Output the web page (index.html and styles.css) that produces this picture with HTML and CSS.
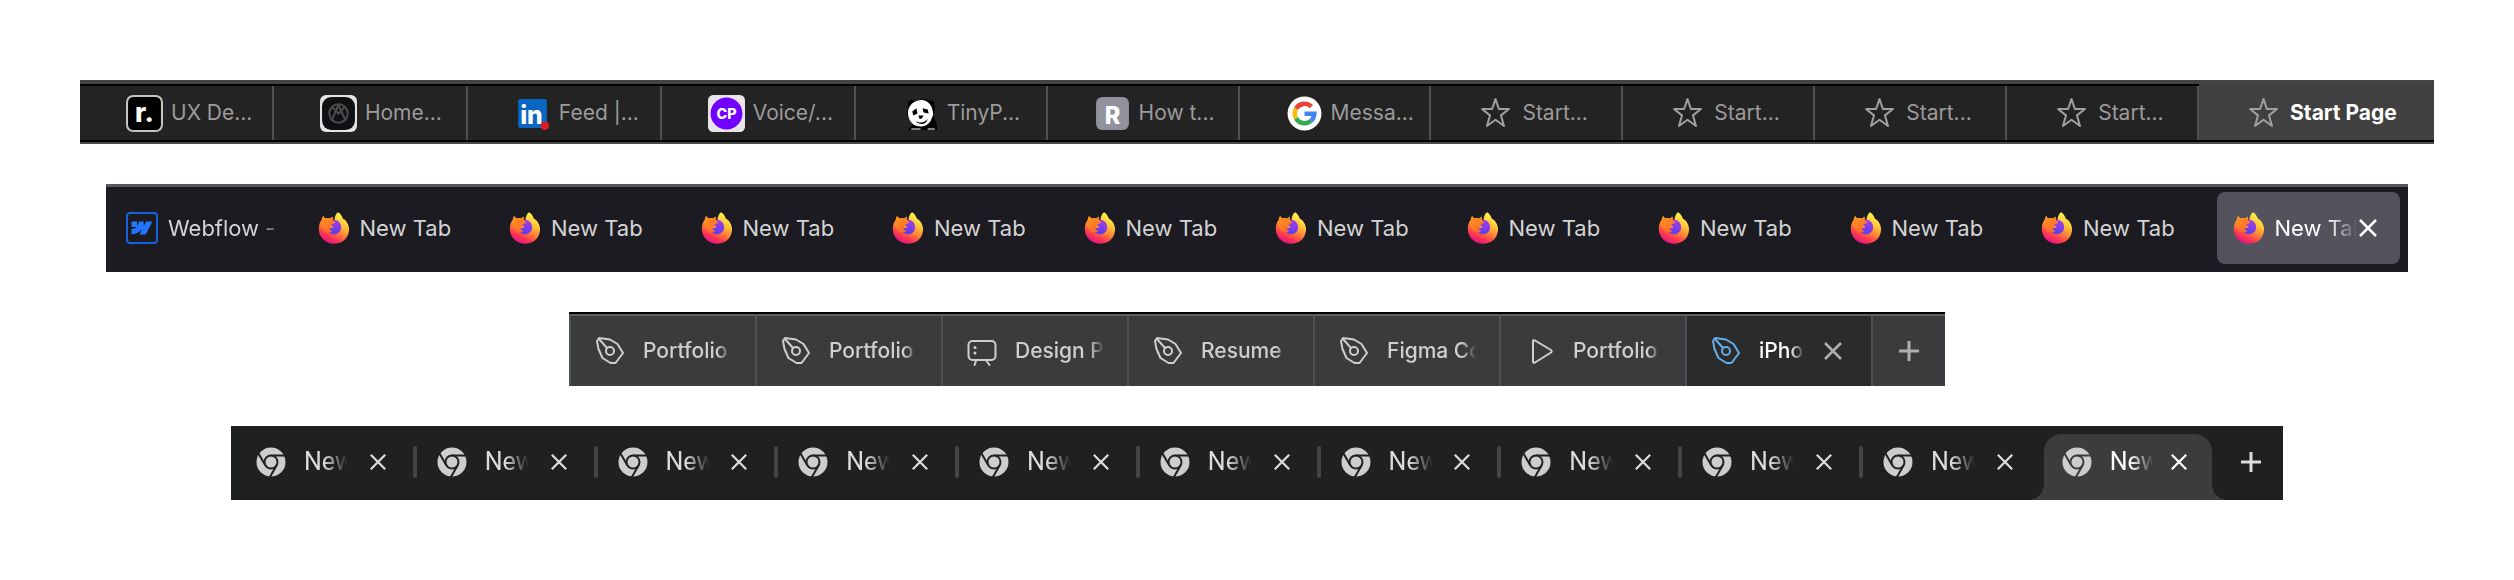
FILE: index.html
```html
<!DOCTYPE html>
<html lang="en">
<head>
    <meta charset="UTF-8">
    <meta name="viewport" content="width=device-width, initial-scale=1.0">
    <title>Browser Tabs</title>
    <link rel="stylesheet" href="styles.css">
</head>
<body>
    <svg class="sprite" width="0" height="0" aria-hidden="true">
        <defs>
            <linearGradient id="ff-body" x1="0.8" y1="0.05" x2="0.35" y2="1">
                <stop offset="0" stop-color="#fff44f"/>
                <stop offset="0.3" stop-color="#ffc93a"/>
                <stop offset="0.55" stop-color="#ff8a35"/>
                <stop offset="0.78" stop-color="#ff3d4c"/>
                <stop offset="1" stop-color="#e0108a"/>
            </linearGradient>
            <linearGradient id="ff-globe" x1="0.6" y1="0" x2="0.4" y2="1">
                <stop offset="0" stop-color="#a53be6"/>
                <stop offset="1" stop-color="#5a3fe8"/>
            </linearGradient>
            <linearGradient id="ff-fox" x1="0" y1="0" x2="0.6" y2="1">
                <stop offset="0" stop-color="#ff9a1f"/>
                <stop offset="1" stop-color="#ff6a2b"/>
            </linearGradient>
            <mask id="chrome-cut">
                <rect width="30" height="30" fill="#fff"/>
                <circle cx="15" cy="15" r="7.5" fill="#000"/>
                <path d="M15 8.4H30M20.7 18.3L13.2 31.3M9.3 18.3L1.8 5.3" stroke="#000" stroke-width="2"/>
            </mask>
        </defs>
        <symbol id="star" viewBox="0 0 30 32">
            <path d="M15 2L18.4 12H28.5L20.5 18.4L23.5 29L15 22.8L6.5 29L9.5 18.4L1.5 12H11.6Z" fill="none" stroke="currentColor" stroke-width="2" stroke-linejoin="round"/>
        </symbol>
        <symbol id="firefox" viewBox="0 0 32 32">
            <path d="M20 0.3C23.5 2 24 5.5 25.2 7C26.8 7.3 27.5 8.5 28.3 9.5C30.5 12.5 31.3 15.5 31 18.5C30.3 26.5 24 31.8 16 31.8C8 31.8 1.200 26 0.8 17.500C0.6 13 2 10 3.800 8C3.800 6.500 4.200 5.200 5.300 3.900C5.700 5 6.300 5.600 7.300 6.300C9 5.800 11 6 12.300 6.700C12.800 5.700 13.800 5 15 4.700C14.300 5.600 14.200 6.800 15 7.800L16.500 8.200C16.500 4.500 18 1.800 20 0.300Z" fill="url(#ff-body)"/>
            <path d="M14 8C19.500 6.300 24.200 11.500 23 17C21.800 22 15 24 11.500 20.500C9.800 18.500 10 16.500 11 15.500C13 16.800 15 16 15.500 14.500C14.500 14 13 13.800 12.500 12.500C12 11 12.500 9 14 8Z" fill="url(#ff-globe)"/>
            <path d="M1.800 13C2.200 10.500 2.800 9 3.800 8C3.800 6.500 4.200 5.200 5.300 3.900C5.700 5 6.300 5.600 7.300 6.300C9 5.800 11 6 12.300 6.700C12.800 5.700 13.800 5 15 4.700C14.200 6.300 14.300 7.500 15.300 8.700C17 9.300 17.300 10.200 17 11C16 12 13.800 12 13 13.200C12.700 14.300 12.800 15 11.500 16C12 18 13 19 14.500 19.500C10 21.500 6 19.500 5 16.500C4.200 14.500 3 14 1.800 13Z" fill="url(#ff-fox)"/>
        </symbol>
        <symbol id="pen" viewBox="0 0 30 30">
            <g fill="none" stroke="currentColor" stroke-width="2" stroke-linejoin="round" stroke-linecap="round">
                <path d="M4 2L15 3.5L22.5 8L28 17L20.5 27L15.5 27L7.5 22L3.5 13L2 5Z"/>
                <circle cx="15" cy="15" r="4"/>
                <path d="M4 3L12 12"/>
            </g>
        </symbol>
        <symbol id="board" viewBox="0 0 30 30">
            <g fill="none" stroke="currentColor" stroke-width="2" stroke-linecap="round">
                <rect x="1.5" y="5" width="27" height="19" rx="4"/>
                <path d="M9 25L7.5 29M19.5 25L22.5 29"/>
            </g>
            <circle cx="8" cy="11.5" r="1.5" fill="currentColor"/>
            <circle cx="8" cy="17" r="1.5" fill="currentColor"/>
        </symbol>
        <symbol id="play" viewBox="0 0 30 30">
            <path d="M8 5.5Q8 3.5 10 4.5L26 14Q27.5 15 26 16.5L10 26.5Q8 27.5 8 25.5Z" fill="none" stroke="currentColor" stroke-width="2" stroke-linejoin="round"/>
        </symbol>
        <symbol id="chrome" viewBox="0 0 30 30">
            <circle cx="15" cy="15" r="14.5" fill="#cdcdcd" mask="url(#chrome-cut)"/>
            <circle cx="15" cy="15" r="5.5" fill="#cdcdcd"/>
        </symbol>
        <symbol id="cross" viewBox="0 0 20 20">
            <path d="M2 2L18 18M18 2L2 18" fill="none" stroke="currentColor" stroke-width="2.5"/>
        </symbol>
        <symbol id="plus" viewBox="0 0 22 22">
            <path d="M11 1V21M1 11H21" fill="none" stroke="currentColor" stroke-width="3"/>
        </symbol>
    </svg>

    <main class="showcase">
        <!-- Safari -->
        <nav class="bar safari" aria-label="Safari tabs">
            <button class="tab">
                <svg class="icon" viewBox="0 0 36 36"><rect x="1" y="1" width="34" height="34" rx="6" fill="#000" stroke="#c4c4c4" stroke-width="2"/><text class="glyph" x="18" y="26" font-size="26">r.</text></svg>
                <span class="label">UX De...</span>
            </button>
            <button class="tab">
                <svg class="icon" viewBox="0 0 36 36"><rect width="36" height="36" rx="6" fill="#e4e4e4"/><rect x="2" y="2" width="32" height="32" rx="9" fill="#101014"/><g fill="none" stroke="#4b4b4b" stroke-width="2"><circle cx="18" cy="18" r="9"/><path d="M11 25L18 10L25 25M12 12L18 18L24 12"/></g></svg>
                <span class="label">Home...</span>
            </button>
            <button class="tab">
                <svg class="icon" viewBox="0 0 36 36"><rect x="4" y="4" width="28" height="28" rx="2" fill="#0a66c2"/><text class="glyph" x="17" y="28" font-size="24">in</text><circle cx="30" cy="30" r="4" fill="#e01b1b"/></svg>
                <span class="label">Feed |...</span>
            </button>
            <button class="tab">
                <svg class="icon" viewBox="0 0 36 36"><rect width="36" height="36" rx="5" fill="#e8e4ea"/><circle cx="18" cy="18" r="15.5" fill="#7300ff"/><text class="glyph" x="18" y="23" font-size="14">CP</text></svg>
                <span class="label">Voice/...</span>
            </button>
            <button class="tab">
                <svg class="icon" viewBox="0 0 36 36"><path d="M6 7L9 4L13 6L22 4L31 6L32 14L30 20L34 28V34H6L10 29L5 20Z" fill="#000"/><path d="M17 5C24 4 29 9 30 16C31 20 29 22 28 25C25 30 19 32 14 30C8 28 5 21 6 15C7 10 11 6 17 5Z" fill="#fff"/><path d="M10 16L14 13L15 18L11 20ZM20 13L25 14L26 18L21 17ZM16 20H21L19 23H17ZM13 25C17 28 22 27 25 23C24 29 17 30 13 25Z" fill="#000"/><path d="M9 33H18M25 33H32" stroke="#fff"/></svg>
                <span class="label">TinyP...</span>
            </button>
            <button class="tab">
                <svg class="icon" viewBox="0 0 36 36"><rect x="2" y="2" width="32" height="32" rx="6" fill="#92929f"/><text class="glyph" x="18" y="28" font-size="23">R</text></svg>
                <span class="label">How t...</span>
            </button>
            <button class="tab">
                <svg class="icon" viewBox="0 0 36 36"><circle cx="18" cy="18" r="16.5" fill="#fff"/><g fill="none" stroke-width="4.5"><path d="M24.7 11.3A9.5 9.5 0 0 0 9.8 13.3" stroke="#ea4335"/><path d="M9.8 13.3A9.5 9.5 0 0 0 9.8 22.7" stroke="#fbbc05"/><path d="M9.8 22.7A9.5 9.5 0 0 0 24.1 25.3" stroke="#34a853"/><path d="M24.1 25.3A9.5 9.5 0 0 0 27.5 18.2H18" stroke="#4285f4"/></g></svg>
                <span class="label">Messa...</span>
            </button>
            <button class="tab"><svg class="icon star"><use href="#star"/></svg><span class="label">Start...</span></button>
            <button class="tab"><svg class="icon star"><use href="#star"/></svg><span class="label">Start...</span></button>
            <button class="tab"><svg class="icon star"><use href="#star"/></svg><span class="label">Start...</span></button>
            <button class="tab"><svg class="icon star"><use href="#star"/></svg><span class="label">Start...</span></button>
            <button class="tab active"><svg class="icon star"><use href="#star"/></svg><span class="label">Start Page</span></button>
        </nav>

        <!-- Firefox -->
        <nav class="bar firefox" aria-label="Firefox tabs">
            <button class="tab">
                <svg class="icon" viewBox="0 0 32 32"><rect x="1" y="1" width="30" height="30" rx="3" fill="none" stroke="#1762de" stroke-width="2"/><path transform="translate(5.500 5.500) scale(0.870)" d="M24 4.515L16.342 19.485H9.149L12.354 13.281H12.210C9.566 16.713 5.621 18.973 0 19.485V13.367S3.596 13.154 5.710 10.932H0V4.515H6.417V9.793H6.561L9.183 4.515H14.037V9.759H14.181L16.901 4.515Z" fill="#2176ff"/></svg>
                <span class="label">Webflow -</span>
            </button>
            <button class="tab"><svg class="icon"><use href="#firefox"/></svg><span class="label">New Tab</span></button>
            <button class="tab"><svg class="icon"><use href="#firefox"/></svg><span class="label">New Tab</span></button>
            <button class="tab"><svg class="icon"><use href="#firefox"/></svg><span class="label">New Tab</span></button>
            <button class="tab"><svg class="icon"><use href="#firefox"/></svg><span class="label">New Tab</span></button>
            <button class="tab"><svg class="icon"><use href="#firefox"/></svg><span class="label">New Tab</span></button>
            <button class="tab"><svg class="icon"><use href="#firefox"/></svg><span class="label">New Tab</span></button>
            <button class="tab"><svg class="icon"><use href="#firefox"/></svg><span class="label">New Tab</span></button>
            <button class="tab"><svg class="icon"><use href="#firefox"/></svg><span class="label">New Tab</span></button>
            <button class="tab"><svg class="icon"><use href="#firefox"/></svg><span class="label">New Tab</span></button>
            <button class="tab"><svg class="icon"><use href="#firefox"/></svg><span class="label">New Tab</span></button>
            <div class="tab active">
                <svg class="icon"><use href="#firefox"/></svg>
                <button class="label">New Tab</button>
                <button class="close" aria-label="Close tab"><svg><use href="#cross"/></svg></button>
            </div>
        </nav>

        <!-- Figma -->
        <nav class="bar figma" aria-label="Figma tabs">
            <button class="tab"><svg class="icon"><use href="#pen"/></svg><span class="label">Portfolio</span></button>
            <button class="tab"><svg class="icon"><use href="#pen"/></svg><span class="label">Portfolio</span></button>
            <button class="tab"><svg class="icon"><use href="#board"/></svg><span class="label">Design P</span></button>
            <button class="tab"><svg class="icon"><use href="#pen"/></svg><span class="label">Resume</span></button>
            <button class="tab"><svg class="icon"><use href="#pen"/></svg><span class="label">Figma Co</span></button>
            <button class="tab"><svg class="icon"><use href="#play"/></svg><span class="label">Portfolio</span></button>
            <div class="tab active">
                <svg class="icon"><use href="#pen"/></svg>
                <button class="label">iPho</button>
                <button class="close" aria-label="Close tab"><svg><use href="#cross"/></svg></button>
            </div>
            <button class="add" aria-label="New tab"><svg><use href="#plus"/></svg></button>
        </nav>

        <!-- Chrome -->
        <nav class="bar chrome" aria-label="Chrome tabs">
            <div class="tab"><svg class="icon"><use href="#chrome"/></svg><button class="label">New</button><button class="close" aria-label="Close tab"><svg><use href="#cross"/></svg></button></div>
            <div class="tab"><svg class="icon"><use href="#chrome"/></svg><button class="label">New</button><button class="close" aria-label="Close tab"><svg><use href="#cross"/></svg></button></div>
            <div class="tab"><svg class="icon"><use href="#chrome"/></svg><button class="label">New</button><button class="close" aria-label="Close tab"><svg><use href="#cross"/></svg></button></div>
            <div class="tab"><svg class="icon"><use href="#chrome"/></svg><button class="label">New</button><button class="close" aria-label="Close tab"><svg><use href="#cross"/></svg></button></div>
            <div class="tab"><svg class="icon"><use href="#chrome"/></svg><button class="label">New</button><button class="close" aria-label="Close tab"><svg><use href="#cross"/></svg></button></div>
            <div class="tab"><svg class="icon"><use href="#chrome"/></svg><button class="label">New</button><button class="close" aria-label="Close tab"><svg><use href="#cross"/></svg></button></div>
            <div class="tab"><svg class="icon"><use href="#chrome"/></svg><button class="label">New</button><button class="close" aria-label="Close tab"><svg><use href="#cross"/></svg></button></div>
            <div class="tab"><svg class="icon"><use href="#chrome"/></svg><button class="label">New</button><button class="close" aria-label="Close tab"><svg><use href="#cross"/></svg></button></div>
            <div class="tab"><svg class="icon"><use href="#chrome"/></svg><button class="label">New</button><button class="close" aria-label="Close tab"><svg><use href="#cross"/></svg></button></div>
            <div class="tab last"><svg class="icon"><use href="#chrome"/></svg><button class="label">New</button><button class="close" aria-label="Close tab"><svg><use href="#cross"/></svg></button></div>
            <div class="tab active"><svg class="icon"><use href="#chrome"/></svg><button class="label">New</button><button class="close" aria-label="Close tab"><svg><use href="#cross"/></svg></button></div>
            <button class="add" aria-label="New tab"><svg><use href="#plus"/></svg></button>
        </nav>
    </main>
</body>
</html>
```
FILE: styles.css
```css
* {
    box-sizing: border-box;
}

body {
    margin: 0;
    background-color: #fff;
    font-family: Inter, "Liberation Sans", sans-serif;
}

button {
    margin: 0;
    padding: 0;
    border: none;
    background: none;
    color: inherit;
    font: inherit;
    text-align: left;
    cursor: pointer;
}

.sprite {
    display: block;
}

.showcase {
    display: flex;
    flex-direction: column;
    align-items: center;
    gap: 40px;
    padding: 80px;
}

.bar {
    display: grid;
    width: 100%;
    font-size: 22px;
    line-height: 28px;
}

.tab {
    display: flex;
    align-items: center;
    min-width: 0;
}

.icon {
    flex: none;
    width: 32px;
    height: 32px;
}

.label {
    min-width: 0;
    overflow: hidden;
    white-space: nowrap;
}

.close {
    flex: none;
}

.close svg {
    display: block;
    width: 20px;
    height: 20px;
}

.add {
    display: flex;
    align-items: center;
    justify-content: center;
}

.add svg {
    display: block;
    width: 22px;
    height: 22px;
}

.glyph {
    fill: #fff;
    font-weight: 800;
    text-anchor: middle;
}

/* Safari */
.safari {
    grid-template-columns: repeat(4, 194fr) repeat(7, 192fr) 235fr;
    border-top: 4px solid #434343;
    border-bottom: 2px solid #4a4a4a;
    background-color: #232323;
    color: #9b9b9b;
    font-size: 21px;
}

.safari .tab {
    height: 58px;
    padding-left: 46px;
    gap: 8px;
    border-top: 2px solid #000;
    border-bottom: 2px solid #000;
    background: linear-gradient(#505050, #505050) right / 2px 100% no-repeat;
}

.safari .tab.active {
    border-top-color: #404040;
    background: #404040;
    color: #fff;
    font-weight: 700;
}

.safari .icon {
    width: 37px;
    height: 37px;
}

.safari .star {
    height: 32px;
    color: #a0a0a0;
}

/* Firefox */
.firefox {
    grid-template-columns: repeat(12, 1fr);
    max-width: 2302px;
    gap: 8px;
    padding: 5px 8px 8px 4px;
    border-top: 3px solid #57575c;
    background-color: #1c1b22;
    color: #d4d4d5;
}

.firefox .tab {
    height: 72px;
    padding: 0 20px 0 16px;
    gap: 10px;
}

.firefox .tab:first-child .label {
    -webkit-mask-image: linear-gradient(to right, #000 88px, transparent 120px);
    mask-image: linear-gradient(to right, #000 88px, transparent 120px);
}

.firefox .tab.active {
    padding-right: 22px;
    border-radius: 8px;
    background-color: #53525d;
    color: #fff;
}

.firefox .active .label {
    flex: 1;
    -webkit-mask-image: linear-gradient(to right, #000 54px, transparent 82px);
    mask-image: linear-gradient(to right, #000 54px, transparent 82px);
}

.firefox .close {
    margin-left: -8px;
}

/* Figma */
.figma {
    grid-template-columns: repeat(7, 186fr) 74fr;
    max-width: 1376px;
    border-top: 2px solid #000;
    background-color: #3a3b3d;
    color: #cfcfcf;
    font-size: 21px;
    font-weight: 500;
}

.figma .tab,
.figma .add {
    height: 72px;
    border-top: 2px solid #606062;
    border-left: 2px solid #505153;
}

.figma .tab {
    padding: 0 22px 0 24px;
    gap: 18px;
}

.figma .icon {
    width: 30px;
    height: 30px;
}

.figma .label {
    flex: 1;
    -webkit-mask-image: linear-gradient(to right, #000 calc(100% - 16px), transparent);
    mask-image: linear-gradient(to right, #000 calc(100% - 16px), transparent);
}

.figma .tab.active {
    padding-right: 28px;
    background-color: #2b2b2b;
    color: #fff;
}

.figma .active .icon {
    color: #64aeea;
}

.figma .close,
.figma .add {
    color: #b0b0b0;
}

/* Chrome */
.chrome {
    grid-template-columns: repeat(10, 361fr) 336fr 142fr;
    max-width: 2052px;
    padding: 8px 0 0 5px;
    background-color: #1f2020;
    color: #dcdcdc;
    font-family: Roboto, sans-serif;
    font-size: 25px;
}

.chrome .tab,
.chrome .add {
    height: 66px;
    padding-bottom: 10px;
}

.chrome .add {
    padding-left: 8px;
    color: #dcdcdc;
}

.chrome .tab {
    position: relative;
    padding-left: 20px;
    gap: 18px;
}

.chrome .tab::after {
    content: "";
    width: 4px;
    height: 32px;
    margin-left: 8px;
    border-radius: 2px;
    background-color: #444;
}

.chrome .tab.last::after {
    background: none;
}

.chrome .icon {
    width: 30px;
    height: 30px;
}

.chrome .close svg {
    width: 18px;
    height: 18px;
}

.chrome .label {
    flex: 1;
    -webkit-mask-image: linear-gradient(to right, #000 20px, transparent 44px);
    mask-image: linear-gradient(to right, #000 20px, transparent 44px);
}

.chrome .tab.active {
    padding: 0 24px 10px 18px;
    border-radius: 18px 18px 0 0;
    background-color: #3c3c3c;
    color: #fff;
}

/* flared feet of the active tab */
.chrome .tab.active::before,
.chrome .tab.active::after {
    content: "";
    position: absolute;
    bottom: 0;
    width: 16px;
    height: 16px;
    margin: 0;
    border-radius: 0;
}

.chrome .tab.active::before {
    right: 100%;
    background: radial-gradient(circle at 0 0, transparent 16px, #3c3c3c 16px);
}

.chrome .tab.active::after {
    left: 100%;
    background: radial-gradient(circle at 100% 0, transparent 16px, #3c3c3c 16px);
}
```
